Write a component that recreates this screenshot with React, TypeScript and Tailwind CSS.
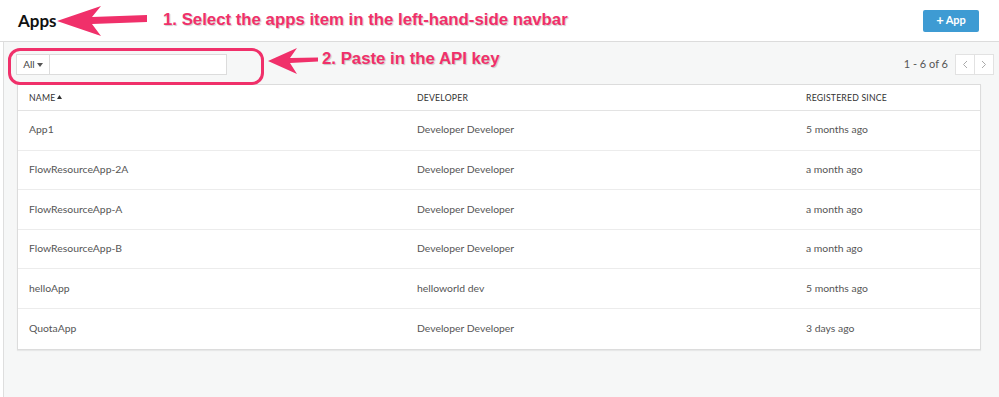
import React from "react";

const rows = [
  ["App1", "Developer Developer", "5 months ago"],
  ["FlowResourceApp-2A", "Developer Developer", "a month ago"],
  ["FlowResourceApp-A", "Developer Developer", "a month ago"],
  ["FlowResourceApp-B", "Developer Developer", "a month ago"],
  ["helloApp", "helloworld dev", "5 months ago"],
  ["QuotaApp", "Developer Developer", "3 days ago"],
];

const pink = "#f0306a";

export default function App() {
  return (
    <div className="relative w-[999px] h-[397px] overflow-hidden bg-white text-[#444]" style={{ fontFamily: "Lato, 'Open Sans', sans-serif" }}>
      {/* header */}
      <div className="h-[42px] flex items-center justify-between pl-[18px] pr-[20px] border-b border-[#dcdcdc] bg-white">
        <h1 className="text-[17px] font-bold text-[#111] leading-none">Apps</h1>
        <button className="h-[22px] w-[56px] rounded-[2px] bg-[#3e9bd3] text-white text-[11px] font-bold flex items-center justify-center gap-[2px]">
          <span className="text-[13px] leading-none">+</span>App
        </button>
      </div>
      {/* body */}
      <div className="h-[355px] ml-[3px] border-l border-[#dedede] bg-[#f6f7f7] pl-[13px] pr-[18px]">
        <div className="h-[42px] flex items-center justify-between pt-[3px]">
          <div className="flex items-center h-[21px] ml-[-1px]">
            <div className="h-full w-[34px] border border-[#dcdcdc] bg-white flex items-center justify-center gap-[2px] text-[10px] text-[#444]">
              All
              <svg width="6" height="4" viewBox="0 0 6 4"><path d="M0 0h6L3 4z" fill="#555" /></svg>
            </div>
            <div className="h-full w-[177px] border border-l-0 border-[#dcdcdc] bg-white" />
          </div>
          <div className="flex items-center gap-[7px] mr-[-13px]">
            <span className="text-[11px] text-[#555]">1 - 6 of 6</span>
            <div className="flex h-[21px] border border-[#e2e2e2] bg-white">
              <div className="w-[19px] flex items-center justify-center border-r border-[#e2e2e2]">
                <svg width="6" height="9" viewBox="0 0 6 9"><path d="M5 1L1.5 4.5L5 8" stroke="#aaa" strokeWidth="1" fill="none" /></svg>
              </div>
              <div className="w-[18px] flex items-center justify-center">
                <svg width="6" height="9" viewBox="0 0 6 9"><path d="M1 1L4.5 4.5L1 8" stroke="#aaa" strokeWidth="1" fill="none" /></svg>
              </div>
            </div>
          </div>
        </div>
        <div className="bg-white border border-[#dcdcdc] shadow-[0_1px_1px_rgba(0,0,0,0.06)]">
          <div className="grid grid-cols-[388px_389px_1fr] h-[26px] items-center border-b border-[#e3e3e3] text-[8.7px] tracking-[0.2px] text-[#333] uppercase">
            <div className="pl-[11px] flex items-center gap-[2px]">Name<svg width="5" height="4" viewBox="0 0 5 4"><path d="M2.5 0L5 4H0z" fill="#333" /></svg></div>
            <div className="pl-[11px]">Developer</div>
            <div className="pl-[11px]">Registered since</div>
          </div>
          {rows.map((r, i) => (
            <div key={i} className={`grid grid-cols-[388px_389px_1fr] h-[39.6px] items-center text-[10.4px] text-[#555] ${i < rows.length - 1 ? "border-b border-[#ececec]" : ""}`}>
              <div className="pl-[11px]">{r[0]}</div>
              <div className="pl-[11px]">{r[1]}</div>
              <div className="pl-[11px]">{r[2]}</div>
            </div>
          ))}
        </div>
      </div>

      {/* annotations */}
      <div className="absolute left-[8px] top-[48px] w-[256px] h-[37px] rounded-[12px] border-[3px]" style={{ borderColor: pink }} />
      <svg className="absolute left-0 top-0" width="999" height="100" viewBox="0 0 999 100">
        <path d="M57 21 L101 6 L92 17 L147 15 L147 22 L92 24 L101 36 Z" fill={pink} />
        <path d="M268 61 L297 48 L290 58 L318 57.5 L318 61.5 L290 63 L297 74 Z" fill={pink} />
      </svg>
      <div className="absolute left-[163px] top-[12px] text-[16.8px] font-bold leading-none whitespace-nowrap" style={{ fontFamily: "'Liberation Sans', Arial, sans-serif", color: pink, textShadow: "1px 1px 1px rgba(0,0,0,0.2)" }}>
        1. Select the apps item in the left-hand-side navbar
      </div>
      <div className="absolute left-[322px] top-[51px] text-[16.8px] font-bold leading-none whitespace-nowrap" style={{ fontFamily: "'Liberation Sans', Arial, sans-serif", color: pink, textShadow: "1px 1px 1px rgba(0,0,0,0.2)" }}>
        2. Paste in the API key
      </div>
    </div>
  );
}
